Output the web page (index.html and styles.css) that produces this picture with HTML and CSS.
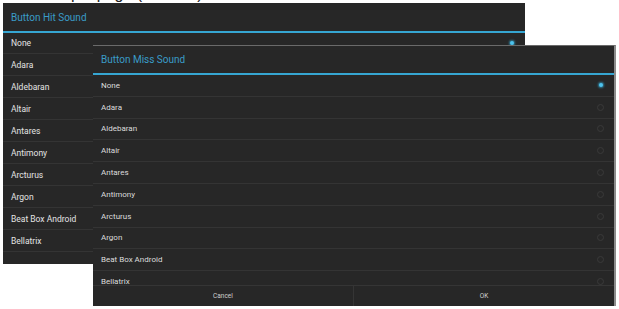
FILE: index.html
```html
<!DOCTYPE html>
<html>
<head>
<meta charset="utf-8">
<link rel="stylesheet" href="styles.css">
</head>
<body>
<div class="caption">Example page (Android)</div>
<div class="dialog hit">
  <div class="title">Button Hit Sound</div>
  <div class="list">
    <div class="row"><span>None</span><i class="radio on"></i></div>
    <div class="row"><span>Adara</span><i class="radio"></i></div>
    <div class="row"><span>Aldebaran</span><i class="radio"></i></div>
    <div class="row"><span>Altair</span><i class="radio"></i></div>
    <div class="row"><span>Antares</span><i class="radio"></i></div>
    <div class="row"><span>Antimony</span><i class="radio"></i></div>
    <div class="row"><span>Arcturus</span><i class="radio"></i></div>
    <div class="row"><span>Argon</span><i class="radio"></i></div>
    <div class="row"><span>Beat Box Android</span><i class="radio"></i></div>
    <div class="row"><span>Bellatrix</span><i class="radio"></i></div>
  </div>
</div>
<div class="dialog miss">
  <div class="title">Button Miss Sound</div>
  <div class="list">
    <div class="row"><span>None</span><i class="radio on"></i></div>
    <div class="row"><span>Adara</span><i class="radio"></i></div>
    <div class="row"><span>Aldebaran</span><i class="radio"></i></div>
    <div class="row"><span>Altair</span><i class="radio"></i></div>
    <div class="row"><span>Antares</span><i class="radio"></i></div>
    <div class="row"><span>Antimony</span><i class="radio"></i></div>
    <div class="row"><span>Arcturus</span><i class="radio"></i></div>
    <div class="row"><span>Argon</span><i class="radio"></i></div>
    <div class="row"><span>Beat Box Android</span><i class="radio"></i></div>
    <div class="row"><span>Bellatrix</span><i class="radio"></i></div>
  </div>
  <div class="buttons">
    <div class="btn">Cancel</div>
    <div class="btn">OK</div>
  </div>
</div>
</body>
</html>
```
FILE: styles.css
```css
html, body {
  margin: 0;
  padding: 0;
  background: #ffffff;
  width: 619px;
  height: 309px;
  overflow: hidden;
  position: relative;
  font-family: Roboto, "Noto Sans", sans-serif;
}
.caption {
  font-family: "Liberation Sans", Arial, sans-serif;
  font-size: 16px;
  line-height: 16px;
  color: #222;
  margin-top: -14px;
  padding-left: 30px;
}
.dialog {
  position: absolute;
  background: #272727;
  display: flex;
  flex-direction: column;
  overflow: hidden;
}
.hit {
  left: 3px;
  top: 3px;
  width: 522px;
  height: 261px;
}
.miss {
  left: 93px;
  top: 45px;
  height: 261px;
  border-right: 2px solid #8c8c8c;
  border-top: 1px solid #6a6a6a;
  box-sizing: border-box;
  width: 523px;
}
.title {
  color: #3a9cc8;
  font-size: 10px;
  height: 28px;
  line-height: 29px;
  padding-left: 8px;
  border-bottom: 2px solid #36a6d2;
  flex: none;
}
.miss .title {
  height: 27px;
  line-height: 28px;
}
.list {
  display: flex;
  flex-direction: column;
  flex: 1;
  overflow: hidden;
}
.row {
  flex: none;
  height: 21px;
  border-bottom: 1px solid #343434;
  display: flex;
  align-items: center;
  justify-content: space-between;
  padding: 0 10px 0 8px;
  font-size: 8.5px;
  color: #e4e4e4;
}
.hit .row:first-child {
  height: 20px;
}
.miss .row {
  height: 20.8px;
  font-size: 8px;
  color: #dcdcdc;
  padding-right: 10px;
}
.radio {
  width: 7px;
  height: 7px;
  border-radius: 50%;
  border: 1px solid #3a3a3a;
  box-sizing: border-box;
  display: flex;
  align-items: center;
  justify-content: center;
}
.radio.on {
  border-color: transparent;
}
.radio.on::after {
  content: "";
  width: 4px;
  height: 4px;
  border-radius: 50%;
  background: #4fc3ee;
  box-shadow: 0 0 2px 1px rgba(51, 181, 229, 0.6);
}
.buttons {
  flex: none;
  height: 20px;
  display: flex;
  border-top: 1px solid #353535;
}
.btn {
  flex: 1;
  display: flex;
  align-items: center;
  justify-content: center;
  color: #cfcfcf;
  font-size: 6.5px;
}
.btn + .btn {
  border-left: 1px solid #353535;
}
```
